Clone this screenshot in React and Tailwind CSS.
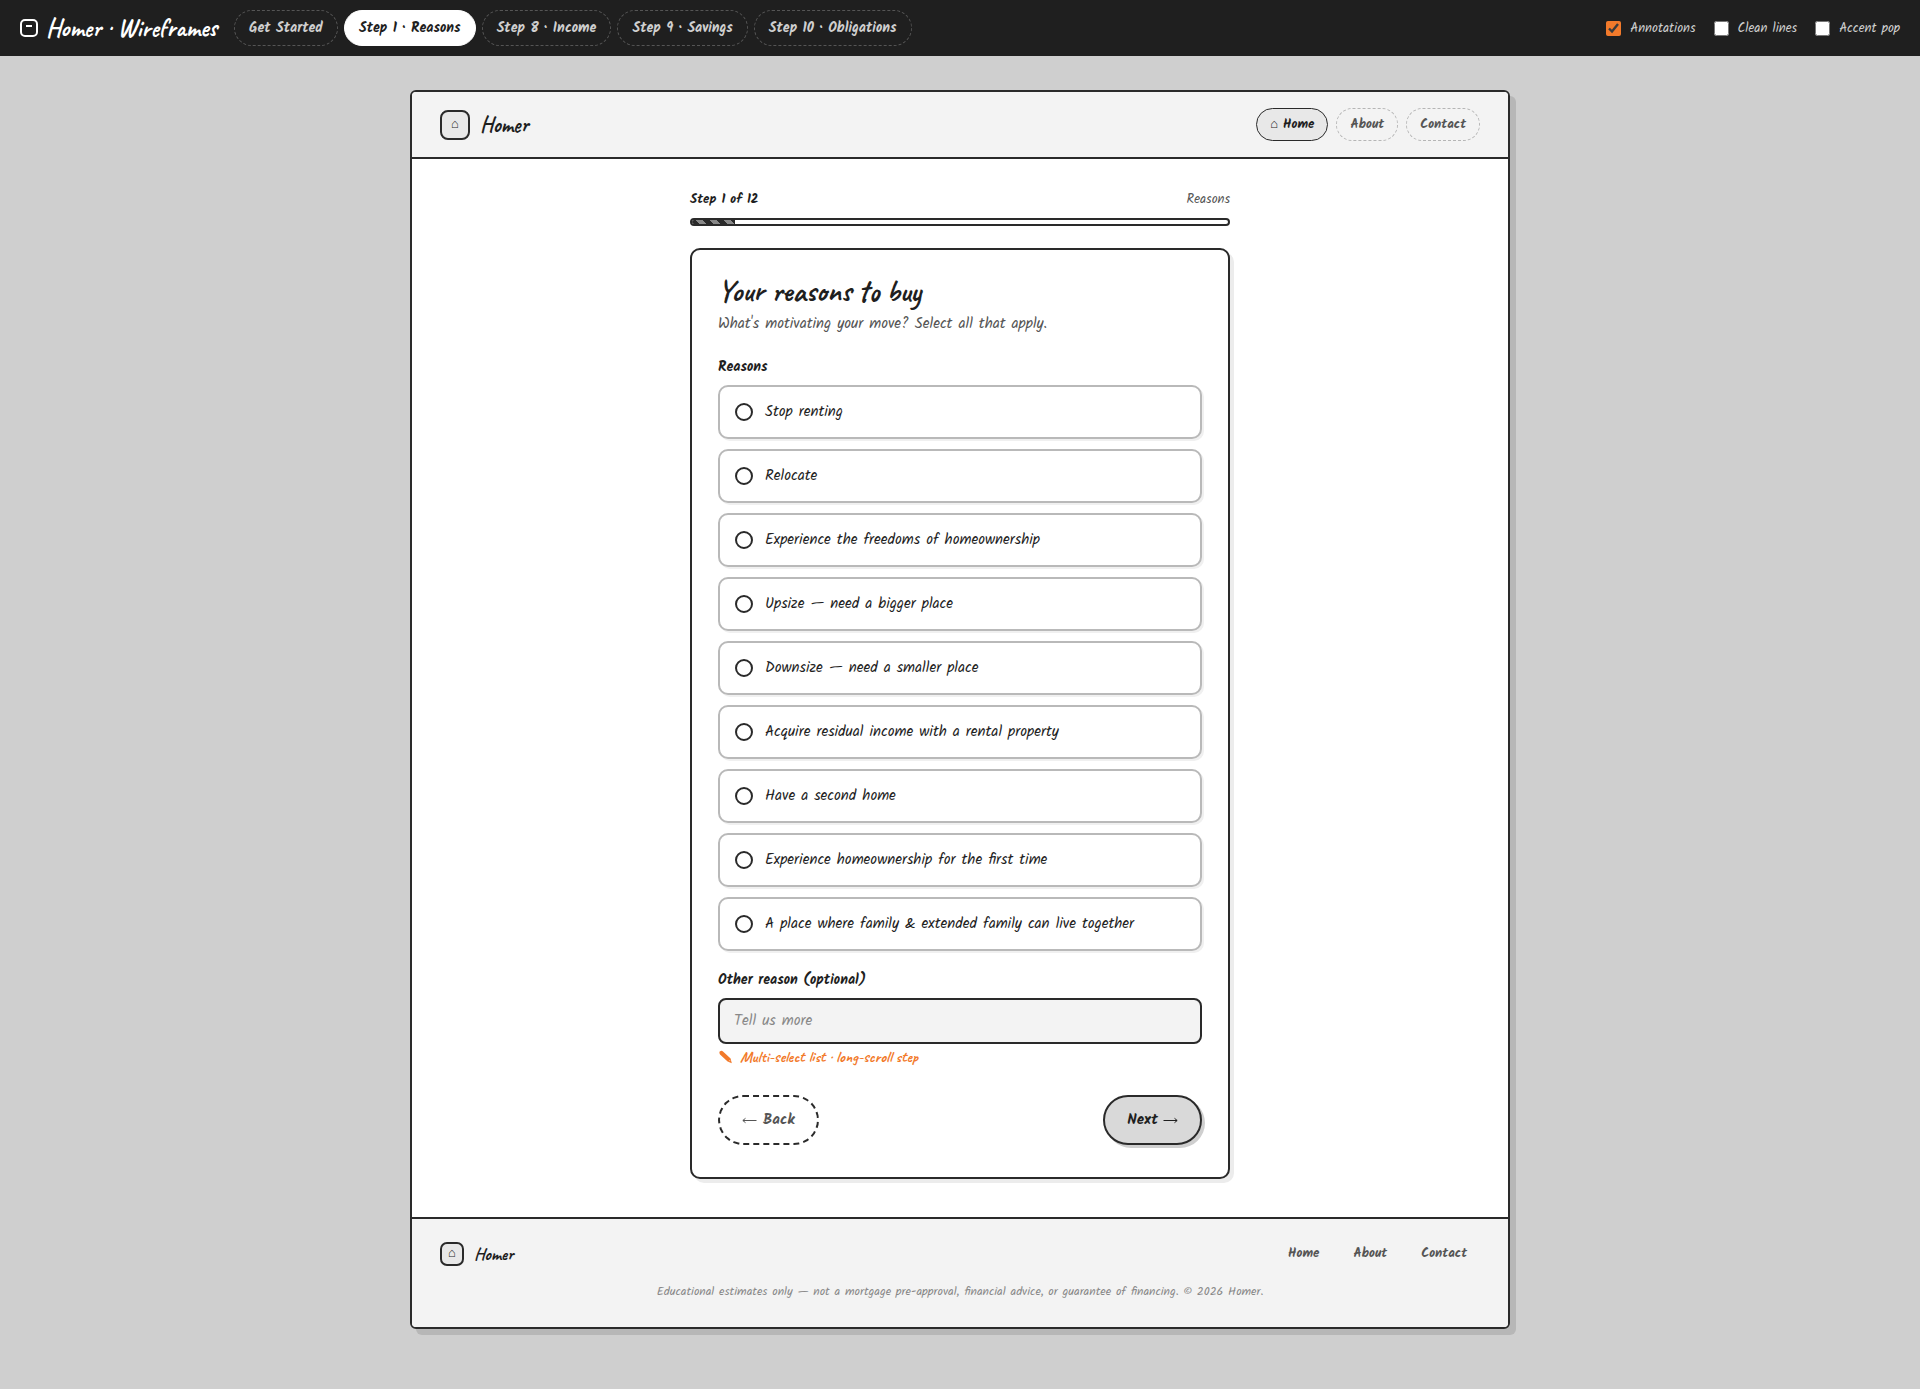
import React, { useState } from 'react';
import clsx from 'clsx';

const screens = [
    { id: 'start', label: 'Get Started' },
    { id: 'reasons', label: 'Step 1 · Reasons' },
    { id: 'income', label: 'Step 8 · Income' },
    { id: 'savings', label: 'Step 9 · Savings' },
    { id: 'obligations', label: 'Step 10 · Obligations' },
];

const reasons = [
    'Stop renting',
    'Relocate',
    'Experience the freedoms of homeownership',
    'Upsize — need a bigger place',
    'Downsize — need a smaller place',
    'Acquire residual income with a rental property',
    'Have a second home',
    'Experience homeownership for the first time',
    'A place where family & extended family can live together',
];

const Arrow = ({ className }) => (
    <svg width="15" height="7" viewBox="0 0 15 7" fill="none" stroke="currentColor" className={className} aria-hidden="true">
        <path d="M0.5 3.5h13.5M11.5 1.3l2.7 2.2l-2.7 2.2" />
    </svg>
);

const Pencil = () => (
    <svg width="14" height="14" viewBox="0 0 14 14" fill="currentColor" aria-hidden="true">
        <path d="M1.4 2.6Q1.2 1.2 2.8 0.9Q4.2 0.6 5 1.5L12.6 8.6L13.8 13.2L9.6 11.5L2 4.4Q1.5 3.8 1.4 2.6Z" />
        <path d="M11.2 11.2l1-1.2" stroke="#fff" strokeWidth="0.6" />
    </svg>
);

const Toggle = ({ label, checked, onChange }) => (
    <label className="flex items-center gap-[9px] text-[13px] text-[#cfcfcf]">
        <input
            type="checkbox"
            checked={checked}
            onChange={(e) => onChange(e.target.checked)}
            className="size-[15px] accent-[#f27a2b]"
        />
        <span className="pt-px">{label}</span>
    </label>
);

const TopBar = () => {
    const [active, setActive] = useState('reasons');
    const [annotations, setAnnotations] = useState(true);
    const [clean, setClean] = useState(false);
    const [accent, setAccent] = useState(false);

    return (
        <div className="flex h-14 items-center gap-[17px] bg-[#1f1f1f] px-5">
            <div className="flex items-center gap-2 text-white">
                <svg width="18" height="18" viewBox="0 0 18 18" fill="none" stroke="currentColor" strokeWidth="2">
                    <rect x="1" y="1" width="16" height="16" rx="4" />
                    <path d="M6 7h6" />
                </svg>
                <span className="font-[Caveat,cursive] text-[25px] leading-8 font-bold">Homer · Wireframes</span>
            </div>
            <nav className="flex gap-[6px]">
                {screens.map((s) => (
                    <button
                        key={s.id}
                        onClick={() => setActive(s.id)}
                        className={clsx(
                            'h-9 rounded-full border px-[14px] pt-px text-[14px] font-bold',
                            active === s.id
                                ? 'border-white bg-white text-[#1f1f1f]'
                                : 'border-dashed border-[#555] text-[#cfcfcf]'
                        )}
                    >
                        {s.label}
                    </button>
                ))}
            </nav>
            <div className="ml-auto flex gap-[18px]">
                <Toggle label="Annotations" checked={annotations} onChange={setAnnotations} />
                <Toggle label="Clean lines" checked={clean} onChange={setClean} />
                <Toggle label="Accent pop" checked={accent} onChange={setAccent} />
            </div>
        </div>
    );
};

const Header = () => (
    <header className="flex items-center justify-between border-b-2 border-[#2a2a2a] bg-[#f3f3f3] px-7 py-4">
        <div className="flex items-center gap-[10px]">
            <span className="flex size-[30px] items-center justify-center rounded-lg border-2 border-[#2a2a2a] bg-[#e8e8e8] text-[13px]">⌂</span>
            <span className="font-[Caveat,cursive] text-[22px] leading-6 font-bold">Homer</span>
        </div>
        <nav className="flex gap-2 text-[13px] leading-[19px] font-bold text-[#555]">
            <a href="#home" className="rounded-full border border-[#2a2a2a] bg-[#e8e8e8] px-[13px] py-[6px] text-[#1f1f1f]">⌂ Home</a>
            <a href="#about" className="rounded-full border border-dashed border-[#b5b5b5] px-[13px] py-[6px]">About</a>
            <a href="#contact" className="rounded-full border border-dashed border-[#b5b5b5] px-[13px] py-[6px]">Contact</a>
        </nav>
    </header>
);

const Progress = ({ step, total, label }) => (
    <div>
        <div className="flex items-center justify-between text-[13px] leading-5">
            <span className="font-bold">Step {step} of {total}</span>
            <span className="text-[#555]">{label}</span>
        </div>
        <div className="mt-2 h-2 overflow-hidden rounded-full border-2 border-[#2a2a2a] bg-white">
            <div
                className="h-full bg-[repeating-linear-gradient(45deg,#2a2a2a_0_5px,#888_5px_10px)]"
                style={{ width: `${Math.round((step / total) * 100)}%` }}
            />
        </div>
    </div>
);

const ReasonOption = ({ label, checked, onToggle }) => (
    <label className="flex h-[54px] items-center gap-3 rounded-[10px] border-2 border-[#b9b9b9] bg-white px-[15px] text-[15px] shadow-[2px_2px_0_#f0f0f0]">
        <input
            type="checkbox"
            checked={checked}
            onChange={onToggle}
            className="size-[18px] shrink-0 appearance-none rounded-full border-2 border-[#2a2a2a] checked:bg-[#2a2a2a]"
        />
        {label}
    </label>
);

const ReasonsCard = () => {
    const [selected, setSelected] = useState([]);
    const [other, setOther] = useState('');

    const toggle = (reason) => {
        setSelected(selected.includes(reason) ? selected.filter((r) => r !== reason) : [...selected, reason]);
    };

    return (
        <div className="mt-[22px] rounded-[10px] border-2 border-[#2a2a2a] bg-white px-[26px] pt-[26px] pb-8 shadow-[4px_4px_0_#ececec]">
            <h1 className="mb-[6px] font-[Caveat,cursive] text-[30px] leading-[30px] font-bold">Your reasons to buy</h1>
            <p className="text-[15px] leading-6 text-[#555]">What's motivating your move? Select all that apply.</p>

            <fieldset className="mt-[21px]">
                <legend className="text-[14px] leading-5 font-bold">Reasons</legend>
                <div className="mt-2 flex flex-col gap-[10px]">
                    {reasons.map((reason) => (
                        <ReasonOption
                            key={reason}
                            label={reason}
                            checked={selected.includes(reason)}
                            onToggle={() => toggle(reason)}
                        />
                    ))}
                </div>
            </fieldset>

            <label htmlFor="other" className="mt-[19px] block text-[14px] leading-5 font-bold">Other reason (optional)</label>
            <input
                id="other"
                type="text"
                value={other}
                onChange={(e) => setOther(e.target.value)}
                placeholder="Tell us more"
                className="mt-2 block h-[46px] w-full rounded-lg border-2 border-[#2a2a2a] bg-[#f3f3f3] px-[14px] text-[15px] placeholder:text-[#888]"
            />
            <p className="mt-[2px] flex items-center gap-2 font-[Caveat,cursive] text-[16px] leading-[22px] font-semibold text-[#f27a2b]">
                <Pencil />
                Multi-select list · long-scroll step
            </p>

            <div className="mt-[27px] flex items-center justify-between text-[15px] font-bold">
                <button className="flex h-[50px] items-center gap-[6px] rounded-full border-2 border-dashed border-[#2a2a2a] px-[22px] text-[#555]">
                    <Arrow className="rotate-180" />
                    Back
                </button>
                <button className="flex h-[50px] items-center gap-[5px] rounded-full border-2 border-[#2a2a2a] bg-[#d9d9d9] px-[22px] shadow-[3px_3px_0_#cfcfcf]">
                    Next
                    <Arrow />
                </button>
            </div>
        </div>
    );
};

const Footer = () => (
    <footer className="border-t-2 border-[#2a2a2a] bg-[#f3f3f3] px-7 pt-[22px] pb-[26px]">
        <div className="flex items-center justify-between">
            <div className="flex items-center gap-[10px]">
                <span className="flex size-6 items-center justify-center rounded-[7px] border-2 border-[#2a2a2a] bg-[#e8e8e8] text-[13px]">⌂</span>
                <span className="font-[Caveat,cursive] text-[18px] leading-[26px] font-bold">Homer</span>
            </div>
            <nav className="flex gap-[34px] pr-[13px] text-[13px] font-bold text-[#555]">
                <a href="#home">Home</a>
                <a href="#about">About</a>
                <a href="#contact">Contact</a>
            </nav>
        </div>
        <p className="mt-4 text-center text-[12px] leading-[18px] text-[#888]">
            Educational estimates only — not a mortgage pre-approval, financial advice, or guarantee of financing. © 2026 Homer.
        </p>
    </footer>
);

const App = () => (
    <div className="min-h-screen bg-[#cfcfcf] font-[Kalam,cursive] text-[#1f1f1f]">
        <TopBar />
        <div className="px-6 pt-[34px] pb-[60px]">
            <div className="mx-auto max-w-[1100px] overflow-hidden rounded-md border-2 border-[#2a2a2a] bg-white shadow-[6px_6px_0_#b7b7b7]">
                <Header />
                <main className="mx-auto max-w-[540px] pt-[31px] pb-[38px]">
                    <Progress step={1} total={12} label="Reasons" />
                    <ReasonsCard />
                </main>
                <Footer />
            </div>
        </div>
    </div>
);

export default App;
